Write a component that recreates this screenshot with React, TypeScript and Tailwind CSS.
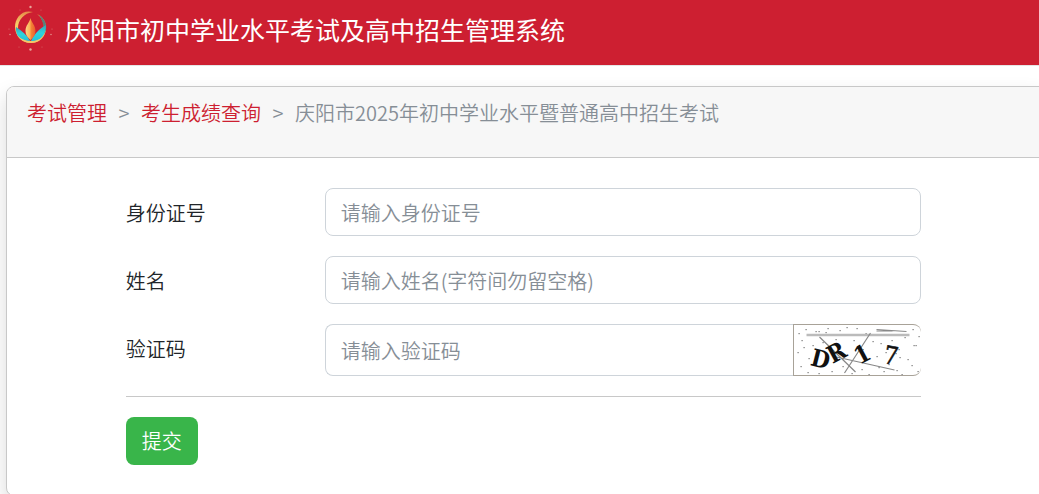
import { useState } from 'react';
import type { FormEvent, InputHTMLAttributes } from 'react';

const inputClass =
  'h-12 w-full min-w-0 border border-[#ced4da] bg-white px-[15px] text-xl text-[#212529] placeholder:text-[#868e96] outline-none focus:border-[#cd1f31]';

const speckles = [
  [4, 8], [11, 4], [7, 15], [3, 27], [6, 41], [13, 47], [21, 6], [18, 20], [24, 48], [31, 7],
  [28, 17], [37, 46], [45, 5], [52, 2], [62, 3], [59, 15], [71, 8], [67, 44], [78, 16], [74, 49],
  [86, 18], [89, 46], [97, 15], [94, 39], [101, 28], [104, 24], [102, 45], [110, 12], [113, 34], [118, 4],
  [119, 20], [121, 20], [117, 40], [123, 46], [107, 49], [57, 48], [48, 41], [82, 31], [91, 27], [14, 33],
  [33, 3], [24, 6], [41, 14], [68, 24], [105, 32], [124, 11], [9, 22], [84, 42],
];

function Logo() {
  return (
    <svg viewBox="0 0 48 48" className="h-12 w-12 shrink-0" aria-hidden="true">
      <defs>
        <linearGradient id="ring" x1="0" y1="0" x2="0" y2="1">
          <stop offset="0" stopColor="#e58a48" />
          <stop offset="0.4" stopColor="#f8cf68" />
          <stop offset="1" stopColor="#f0b85c" />
        </linearGradient>
        <linearGradient id="flame" x1="0" y1="0" x2="1" y2="0">
          <stop offset="0" stopColor="#fbd684" />
          <stop offset="0.48" stopColor="#fbb052" />
          <stop offset="0.52" stopColor="#f58a38" />
          <stop offset="1" stopColor="#ea5c2c" />
        </linearGradient>
        <linearGradient id="leaf" x1="0" y1="0" x2="0" y2="1">
          <stop offset="0" stopColor="#38a5b5" />
          <stop offset="0.5" stopColor="#2ed3dc" />
          <stop offset="1" stopColor="#22c3d8" />
        </linearGradient>
      </defs>
      <path
        d="M26 7C15 4 8 13 8 22c0 9 7 16 16 16 8 0 15-6 15-15 0-7-4-12-9-14 4 3 7 8 7 13 0 8-6 14-13 14-7 0-13-5-13-13 0-8 6-15 15-16z"
        fill="url(#ring)"
      />
      <path d="M32 10c6 4 8 9 7 15l-2 4c0-8-1-13-5-19z" fill="#5b7f78" />
      <path d="M9 22c6 4 11 8 14 14C14 36 8 31 9 22z" fill="url(#leaf)" />
      <path d="M39 20c-7 4-12 9-15 16 9 1 15-6 15-16z" fill="url(#leaf)" />
      <path d="M10 30c4 4 8 6 14 6s10-2 13-6c-3 5-7 8-13 8s-11-3-14-8z" fill="#f4c96a" />
      <path d="M23.500 13c1 5 5 7 5 13 0 4-2 6-5 9-3-3-5-5-5-9 0-6 4-8 5-13z" fill="url(#flame)" />
      <g fill="#e7a59a">
        <circle cx="23.500" cy="2" r="1.200" />
        <circle cx="23.500" cy="44.500" r="1.200" />
        <circle cx="13" cy="5" r="0.500" opacity="0.600" />
        <circle cx="34" cy="5" r="0.500" opacity="0.600" />
        <circle cx="2" cy="24" r="0.600" opacity="0.600" />
        <circle cx="45" cy="24" r="0.600" opacity="0.600" />
        <circle cx="3" cy="29.500" r="0.700" />
        <circle cx="44" cy="29.500" r="0.700" />
        <circle cx="12" cy="42" r="0.500" opacity="0.600" />
        <circle cx="35" cy="42" r="0.500" opacity="0.600" />
      </g>
    </svg>
  );
}

function Captcha() {
  return (
    <svg
      viewBox="0 0 126 50"
      className="h-full w-full font-['DejaVu_Serif_Condensed','DejaVu_Serif',serif]"
      role="img"
      aria-label="验证码"
    >
      <g fill="#777">
        {speckles.map(([x, y]) => (
          <rect key={`${x}-${y}`} x={x} y={y} width="1.200" height="1.200" />
        ))}
      </g>
      <path d="M12 10H115" stroke="#bbb" strokeWidth="2.400" />
      <g stroke="#888" strokeWidth="1.200" fill="none">
        <path d="M82 4.500 112 6.500M82 6 98 6" />
        <path d="M25 12 61 47M76 8 50 48M42 32 100 45" />
      </g>
      <g fill="#111" fontWeight="700">
        <text x="15" y="40" fontSize="24" transform="rotate(14 15 40)">D</text>
        <text x="38" y="39" fontSize="24" transform="rotate(-28 38 39)">R</text>
        <text x="65" y="40" fontSize="24" transform="rotate(-28 65 40)">1</text>
        <text x="88" y="38" fontSize="25" fontWeight="400" stroke="#111" strokeWidth="0.500" transform="rotate(10 88 38)">7</text>
      </g>
    </svg>
  );
}

interface FieldProps extends InputHTMLAttributes<HTMLInputElement> {
  id: string;
  label: string;
}

function Field({ id, label, ...props }: FieldProps) {
  return (
    <div className="grid grid-cols-4">
      <label htmlFor={id} className="pt-2.5 leading-[30px]">{label}</label>
      <div className="col-span-3">
        <input id={id} name={id} type="text" className={`${inputClass} rounded-lg`} {...props} />
      </div>
    </div>
  );
}

function Breadcrumb() {
  return (
    <nav aria-label="breadcrumb">
      <ol className="flex flex-wrap leading-[30px] text-[#868e96]">
        <li><a href="#exam" className="text-[#cd1f31]">考试管理</a></li>
        <li aria-hidden="true" className="w-[34px] text-center">&gt;</li>
        <li><a href="#score" className="text-[#cd1f31]">考生成绩查询</a></li>
        <li aria-hidden="true" className="w-[34px] text-center">&gt;</li>
        <li aria-current="page">庆阳市2025年初中学业水平暨普通高中招生考试</li>
      </ol>
    </nav>
  );
}

export default function App() {
  const [form, setForm] = useState({ idCard: '', name: '', code: '' });

  const update = (key: keyof typeof form) => (value: string) =>
    setForm((prev) => ({ ...prev, [key]: value }));

  const handleSubmit = (e: FormEvent) => {
    e.preventDefault();
  };

  return (
    <div className="overflow-hidden bg-white font-['Noto_Sans_CJK_SC',sans-serif] text-xl font-[350] text-[#212529]">
      <header className="flex h-[66px] items-center border-b border-[#e5e5e5] bg-[#cd1f31] pb-2 pl-[7px]">
        <Logo />
        <h1 className="ml-2.5 text-[25px] leading-[30px] font-normal text-white">
          庆阳市初中学业水平考试及高中招生管理系统
        </h1>
      </header>

      <main className="-mr-0.5 pt-5 pl-1.5">
        <section className="overflow-hidden rounded-l-lg border border-[#c8c8c8] bg-white shadow-[0_10px_20px_rgba(0,0,0,0.15)]">
          <div className="min-h-[71px] border-b border-[#c8c8c8] bg-[#f7f7f7] px-5 pt-[11px]">
            <Breadcrumb />
          </div>

          <form onSubmit={handleSubmit} className="mx-auto flex w-[77%] flex-col gap-5 pt-[30px] pb-[30px]">
            <Field
              id="idCard"
              label="身份证号"
              placeholder="请输入身份证号"
              value={form.idCard}
              onChange={(e) => update('idCard')(e.target.value)}
            />
            <Field
              id="name"
              label="姓名"
              placeholder="请输入姓名(字符间勿留空格)"
              value={form.name}
              onChange={(e) => update('name')(e.target.value)}
            />
            <div className="grid grid-cols-4">
              <label htmlFor="code" className="pt-2.5 leading-[30px]">验证码</label>
              <div className="col-span-3 flex h-[52px]">
                <input
                  id="code"
                  name="code"
                  type="text"
                  placeholder="请输入验证码"
                  className={`${inputClass} h-full flex-1 rounded-l-lg border-r-0`}
                  value={form.code}
                  onChange={(e) => update('code')(e.target.value)}
                />
                <button
                  type="button"
                  aria-label="刷新验证码"
                  className="w-32 shrink-0 cursor-pointer overflow-hidden rounded-r-lg border border-r-0 border-[#a8a298] bg-white"
                >
                  <Captcha />
                </button>
              </div>
            </div>
            <hr className="border-[#c8c8c8]" />
            <button
              type="submit"
              className="h-12 cursor-pointer self-start rounded-lg bg-[#39b54a] px-4 text-white hover:bg-[#2f9a3e]"
            >
              提交
            </button>
          </form>
        </section>
      </main>
    </div>
  );
}
